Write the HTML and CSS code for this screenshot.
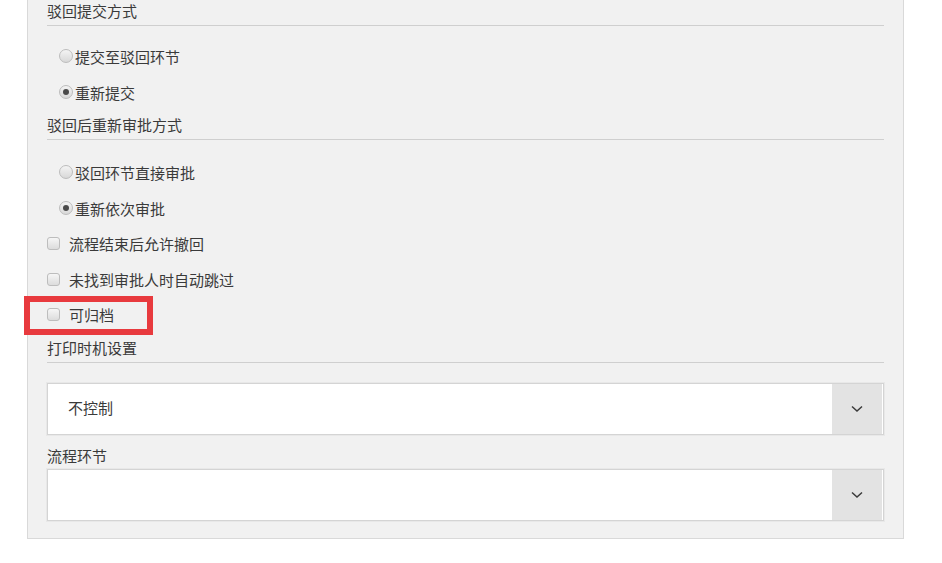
FILE: index.html
```html
<!DOCTYPE html>
<html lang="zh-CN">
<head>
<meta charset="utf-8">
<title>流程设置</title>
<link rel="stylesheet" href="styles.css">
</head>
<body>
<div class="panel">
  <div class="section-title">驳回提交方式</div>
  <div class="radio-group">
    <label class="radio-row"><span class="radio"></span>提交至驳回环节</label>
    <label class="radio-row"><span class="radio checked"></span>重新提交</label>
  </div>
  <div class="section-title">驳回后重新审批方式</div>
  <div class="radio-group last">
    <label class="radio-row"><span class="radio"></span>驳回环节直接审批</label>
    <label class="radio-row"><span class="radio checked"></span>重新依次审批</label>
  </div>
  <div class="check-group">
    <label class="check-row"><span class="checkbox"></span>流程结束后允许撤回</label>
    <label class="check-row"><span class="checkbox"></span>未找到审批人时自动跳过</label>
    <label class="check-row highlighted"><span class="checkbox"></span>可归档<span class="mark"></span></label>
  </div>
  <div class="section-title">打印时机设置</div>
  <div class="select first">
    <span class="select-value">不控制</span>
    <span class="select-btn"><svg width="12" height="8" viewBox="0 0 12 8"><path d="M1 1.5 L6 6 L11 1.5" fill="none" stroke="#3a3a3a" stroke-width="1.5"/></svg></span>
  </div>
  <div class="field-label">流程环节</div>
  <div class="select">
    <span class="select-value"></span>
    <span class="select-btn"><svg width="12" height="8" viewBox="0 0 12 8"><path d="M1 1.5 L6 6 L11 1.5" fill="none" stroke="#3a3a3a" stroke-width="1.5"/></svg></span>
  </div>
</div>
</body>
</html>
```

FILE: styles.css
```css
* { box-sizing: border-box; }
body {
  margin: 0;
  background: #fff;
  font-family: "Noto Sans CJK SC", "Microsoft YaHei", sans-serif;
  font-size: 15px;
  color: #3a3a3a;
}
.panel {
  margin-left: 27px;
  width: 877px;
  background: #f1f1f1;
  border: 1px solid #d9d9d9;
  border-top: none;
  padding: 0 19px 17px 19px;
}
.section-title {
  line-height: 22px;
  height: 26px;
  padding-bottom: 3px;
  border-bottom: 1px solid #cfcfcf;
}
.radio-group {
  padding-top: 12px;
  padding-bottom: 4px;
}
.radio-group.last {
  padding-top: 14px;
  padding-bottom: 0;
}
.radio-row {
  display: flex;
  align-items: center;
  height: 36px;
  padding-left: 12px;
}
.radio {
  width: 14px;
  height: 14px;
  border-radius: 50%;
  border: 1px solid #bdbdbd;
  background: linear-gradient(#f4f4f4, #d8d8d8);
  margin-right: 2px;
  display: flex;
  align-items: center;
  justify-content: center;
}
.radio.checked::after {
  content: "";
  width: 6px;
  height: 6px;
  border-radius: 50%;
  background: #4a4a4a;
}
.check-group {
  padding-bottom: 4px;
}
.check-row {
  position: relative;
  display: flex;
  align-items: center;
  height: 35.5px;
}
.checkbox {
  width: 13px;
  height: 13px;
  border: 1px solid #bdbdbd;
  border-radius: 3px;
  background: linear-gradient(#f6f6f6, #dcdcdc);
  margin-right: 9px;
}
.mark {
  position: absolute;
  left: -23px;
  top: -1px;
  width: 129px;
  height: 39px;
  border: 6px solid #e83a3e;
}
.select {
  display: flex;
  height: 52px;
  background: #fff;
  border: 1px solid #d4d4d4;
  outline: 1px solid #e8e8e8;
}
.select.first { margin-top: 20px; }
.select-value {
  flex: 1;
  padding-left: 20px;
  line-height: 48px;
}
.select-btn {
  width: 50px;
  background: #e3e3e3;
  display: flex;
  align-items: center;
  justify-content: center;
  margin-right: 1px;
}
.field-label {
  margin-top: 10px;
  line-height: 22px;
  height: 24px;
}
```
